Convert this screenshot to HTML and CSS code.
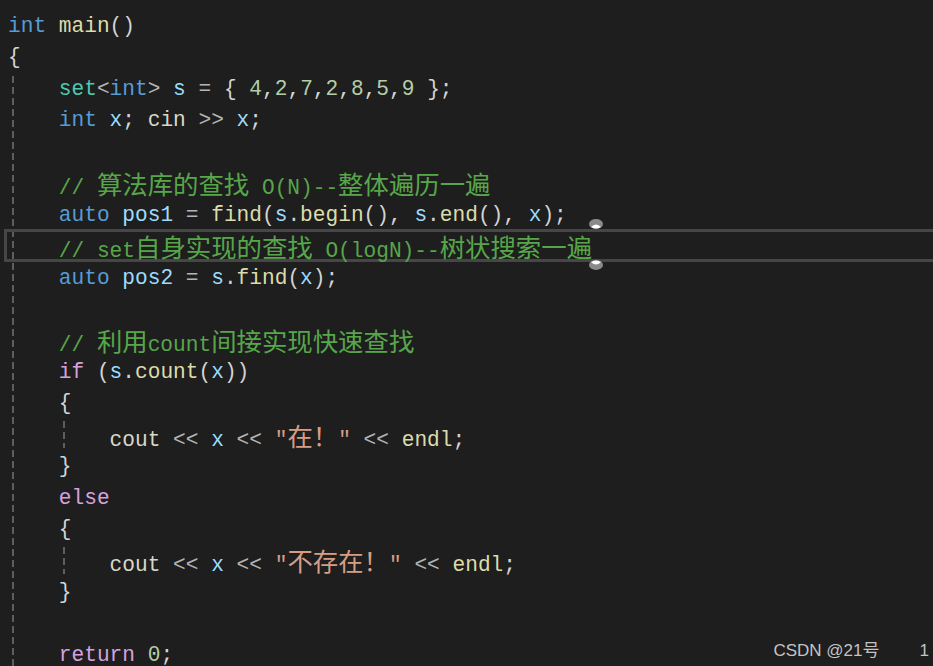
FILE: index.html
```html
<!DOCTYPE html>
<html lang="zh-CN">
<head>
<meta charset="utf-8">
<title>set find</title>
<link rel="stylesheet" href="styles.css">
</head>
<body>
<div class="editor">
  <div class="guide guide-outer"></div>
  <div class="guide guide-in1"></div>
  <div class="guide guide-in2"></div>
  <div class="curline"></div>
  <svg class="handle handle-top" width="16" height="12" viewBox="0 0 16 12"><ellipse cx="8" cy="6" rx="7" ry="5" fill="#8a8a8a"/><path d="M3 9 Q8 4 13 9 Q8 12 3 9Z" fill="#ffffff"/></svg>
  <svg class="handle handle-bot" width="16" height="12" viewBox="0 0 16 12"><ellipse cx="8" cy="6" rx="7" ry="5" fill="#8a8a8a"/><path d="M3 3 Q8 0 13 3 Q8 8 3 3Z" fill="#ffffff"/></svg>

  <div class="code">
    <div class="ln"><span class="kw">int</span> <span class="fn">main</span><span class="p">()</span></div>
    <div class="ln"><span class="p">{</span></div>
    <div class="ln">    <span class="ty">set</span><span class="op">&lt;</span><span class="kw">int</span><span class="op">&gt;</span> <span class="var">s</span> <span class="op">=</span> <span class="p">{</span> <span class="num">4</span><span class="p">,</span><span class="num">2</span><span class="p">,</span><span class="num">7</span><span class="p">,</span><span class="num">2</span><span class="p">,</span><span class="num">8</span><span class="p">,</span><span class="num">5</span><span class="p">,</span><span class="num">9</span> <span class="p">};</span></div>
    <div class="ln">    <span class="kw">int</span> <span class="var">x</span><span class="p">;</span> <span class="gl">cin</span> <span class="op">&gt;&gt;</span> <span class="var">x</span><span class="p">;</span></div>
    <div class="ln"> </div>
    <div class="ln">    <span class="cm">// <span class="cj">算法库的查找</span> O(N)--<span class="cj">整体遍历一遍</span></span></div>
    <div class="ln">    <span class="kw">auto</span> <span class="var">pos1</span> <span class="op">=</span> <span class="fn">find</span><span class="p">(</span><span class="var">s</span><span class="p">.</span><span class="fn">begin</span><span class="p">(),</span> <span class="var">s</span><span class="p">.</span><span class="fn">end</span><span class="p">(),</span> <span class="var">x</span><span class="p">);</span></div>
    <div class="ln">    <span class="cm">// set<span class="cj">自身实现的查找</span> O(logN)--<span class="cj">树状搜索一遍</span></span></div>
    <div class="ln">    <span class="kw">auto</span> <span class="var">pos2</span> <span class="op">=</span> <span class="var">s</span><span class="p">.</span><span class="fn">find</span><span class="p">(</span><span class="var">x</span><span class="p">);</span></div>
    <div class="ln"> </div>
    <div class="ln">    <span class="cm">// <span class="cj">利用</span>count<span class="cj">间接实现快速查找</span></span></div>
    <div class="ln">    <span class="ctl">if</span> <span class="p">(</span><span class="var">s</span><span class="p">.</span><span class="fn">count</span><span class="p">(</span><span class="var">x</span><span class="p">))</span></div>
    <div class="ln">    <span class="p">{</span></div>
    <div class="ln">        <span class="gl">cout</span> <span class="op">&lt;&lt;</span> <span class="var">x</span> <span class="op">&lt;&lt;</span> <span class="str">"<span class="cj">在！</span>"</span> <span class="op">&lt;&lt;</span> <span class="fn">endl</span><span class="p">;</span></div>
    <div class="ln">    <span class="p">}</span></div>
    <div class="ln">    <span class="ctl">else</span></div>
    <div class="ln">    <span class="p">{</span></div>
    <div class="ln">        <span class="gl">cout</span> <span class="op">&lt;&lt;</span> <span class="var">x</span> <span class="op">&lt;&lt;</span> <span class="str">"<span class="cj">不存在！</span>"</span> <span class="op">&lt;&lt;</span> <span class="fn">endl</span><span class="p">;</span></div>
    <div class="ln">    <span class="p">}</span></div>
    <div class="ln"> </div>
    <div class="ln">    <span class="ctl">return</span> <span class="num">0</span><span class="p">;</span></div>
  </div>

  <div class="watermark"><span>CSDN @21号</span><span class="colnum">1</span></div>
</div>
</body>
</html>
```

FILE: styles.css
```css
html, body {
  margin: 0;
  padding: 0;
  background: #1e1e1e;
  overflow: hidden;
}

.editor {
  position: relative;
  width: 933px;
  height: 666px;
  overflow: hidden;
  background: #1e1e1e;
}

.code {
  padding: 11px 0 0 8px;
  font-family: "Liberation Mono", "Noto Sans CJK SC", monospace;
  font-size: 21.17px;
  color: #d4d4d4;
}

.ln {
  height: 31.45px;
  line-height: 31.45px;
  white-space: pre;
  position: relative;
  z-index: 2;
}

.cj {
  font-family: "Noto Sans CJK SC", sans-serif;
  font-size: 25.4px;
  line-height: 31.45px;
  font-weight: 400;
}

.kw  { color: #569cd6; }
.fn  { color: #dcdcaa; }
.p   { color: #d4d4d4; }
.op  { color: #b4b4b4; }
.ty  { color: #4ec9b0; }
.var { color: #9cdcfe; }
.num { color: #b5cea8; }
.gl  { color: #d8d8c8; }
.cm  { color: #57a64a; }
.ctl { color: #d8a0df; }
.str { color: #d69d85; }

.guide {
  position: absolute;
  width: 2px;
  background: repeating-linear-gradient(to bottom, #5e5e5e 0, #5e5e5e 7px, transparent 7px, transparent 11px);
  z-index: 1;
}

.guide-outer { left: 12px; top: 76px; bottom: 0; }
.guide-in1 { left: 63px; top: 421px; height: 27px; }
.guide-in2 { left: 63px; top: 547px; height: 27px; }

.curline {
  position: absolute;
  left: 4px;
  top: 229px;
  width: 940px;
  height: 27px;
  border: 3px solid #464646;
  z-index: 1;
}

.handle {
  position: absolute;
  left: 588px;
  z-index: 3;
}
.handle-top { top: 218px; }
.handle-bot { top: 259px; }

.watermark {
  position: absolute;
  right: 4px;
  bottom: 5px;
  display: flex;
  align-items: baseline;
  gap: 40px;
  font-family: "Liberation Sans", "Noto Sans CJK SC", sans-serif;
  font-size: 17px;
  color: #c4c4c4;
  z-index: 3;
}

.colnum {
  font-size: 17px;
}
```
